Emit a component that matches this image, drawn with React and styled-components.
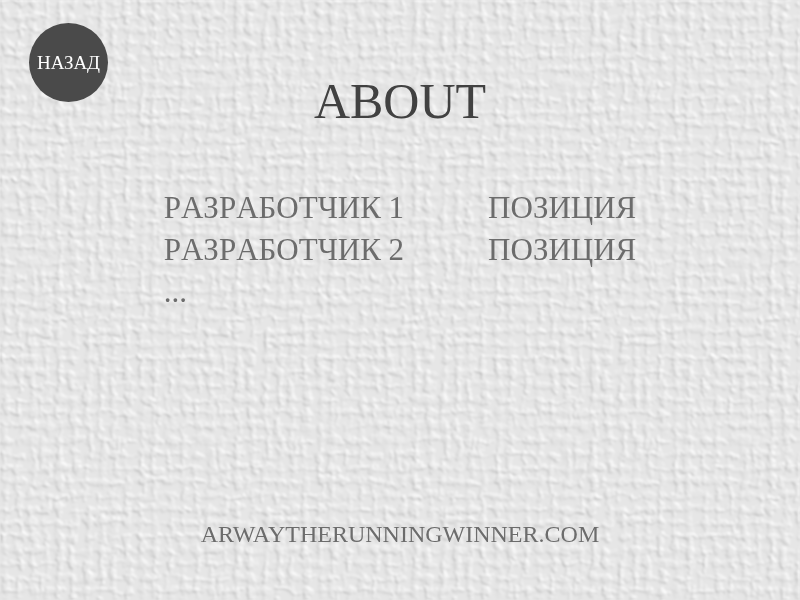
import React from 'react';
import styled, { createGlobalStyle } from 'styled-components';

const GlobalStyle = createGlobalStyle`
  body {
    margin: 0;
    background: #e4e4e4;
    font-family: "Liberation Serif", "Times New Roman", serif;
  }
`;

const Screen = styled.div`
  position: relative;
  isolation: isolate;
  will-change: transform;
  box-sizing: border-box;
  min-height: 100vh;
  display: flex;
  flex-direction: column;
  align-items: center;
  padding: 23px 29px 51px;
`;

const Texture = styled.svg`
  position: absolute;
  inset: 0;
  z-index: -1;
  width: 100%;
  height: 100%;
`;

const Header = styled.header`
  width: 100%;
  display: grid;
  grid-template-columns: 1fr auto 1fr;
  align-items: start;
`;

const BackButton = styled.button`
  width: 79px;
  height: 79px;
  padding: 0;
  border: 0;
  border-radius: 50%;
  background: #4a4a4a;
  color: #fff;
  font: 19px/24px "Liberation Serif", "Times New Roman", serif;
  cursor: pointer;
`;

const Title = styled.h1`
  margin: 49px 0 0;
  color: #414141;
  font-size: 50px;
  font-weight: 400;
  line-height: 58px;
`;

const Credits = styled.table`
  margin-top: 57px;
  border-collapse: collapse;
  color: #6c6c6c;
  font-size: 31px;
  font-kerning: none;
  line-height: 42px;
`;

const Cell = styled.td`
  padding: 0;

  & + & {
    padding-left: 84px;
  }
`;

const Footer = styled.footer`
  margin-top: auto;
`;

const SiteLink = styled.a`
  color: #6c6c6c;
  font-size: 24px;
  line-height: 30px;
  text-decoration: none;
`;

const developers = [
  ['РАЗРАБОТЧИК 1', 'ПОЗИЦИЯ'],
  ['РАЗРАБОТЧИК 2', 'ПОЗИЦИЯ'],
  ['...', ''],
];

const TILE = 178;

// Short raised fibres, laid in both directions on a loose grid.
function weaveFibres() {
  let state = 20177;
  const random = () => {
    state = (state * 16807) % 2147483647;
    return state / 2147483647;
  };
  const between = (low, high) => low + random() * (high - low);
  const step = TILE / 13;
  const fibres = [];
  for (let row = 0; row < 13; row += 1) {
    for (let col = 0; col < 13; col += 1) {
      const x = (col + between(0, 0.4)) * step;
      const y = (row + between(0, 0.4)) * step;
      fibres.push({
        d: `M${x} ${y}l${between(6, 22)} ${between(-1, 1)}`,
        width: between(2, 6),
        opacity: between(0.15, 0.6),
      });
      fibres.push({
        d: `M${x + between(0, 4)} ${y - 3}l${between(-1, 1)} ${between(6, 22)}`,
        width: between(2, 6),
        opacity: between(0.15, 0.6),
      });
    }
  }
  return fibres;
}

const fibres = weaveFibres();

function PaperTexture() {
  return (
    <Texture aria-hidden="true">
      <defs>
        <g id="fibres" stroke="#000" strokeLinecap="round" fill="none">
          {fibres.map(({ d, width, opacity }) => (
            <path key={d} d={d} strokeWidth={width} strokeOpacity={opacity} />
          ))}
        </g>
        <pattern id="weave" width={TILE} height={TILE} patternUnits="userSpaceOnUse">
          <use href="#fibres" />
          <use href="#fibres" x={-TILE} />
          <use href="#fibres" y={-TILE} />
          <use href="#fibres" x={-TILE} y={-TILE} />
        </pattern>
        <filter id="paper" x="0" y="0" width="100%" height="100%" colorInterpolationFilters="sRGB">
          <feTurbulence type="fractalNoise" baseFrequency="0.15" numOctaves="3" seed="4" result="grain" />
          <feDisplacementMap in="SourceGraphic" in2="grain" scale="8" xChannelSelector="R" yChannelSelector="G" />
          <feGaussianBlur stdDeviation="1" />
          <feDiffuseLighting surfaceScale="0.36" diffuseConstant="1.04" lightingColor="#ffffff">
            <feDistantLight azimuth="315" elevation="60" />
          </feDiffuseLighting>
        </filter>
      </defs>
      <rect width="100%" height="100%" fill="url(#weave)" filter="url(#paper)" />
    </Texture>
  );
}

export default function App() {
  return (
    <>
      <GlobalStyle />
      <Screen>
        <PaperTexture />
        <Header>
          <BackButton type="button">НАЗАД</BackButton>
          <Title>ABOUT</Title>
        </Header>
        <Credits>
          <tbody>
            {developers.map(([name, position]) => (
              <tr key={name}>
                <Cell>{name}</Cell>
                <Cell>{position}</Cell>
              </tr>
            ))}
          </tbody>
        </Credits>
        <Footer>
          <SiteLink href="http://arwaytherunningwinner.com">ARWAYTHERUNNINGWINNER.COM</SiteLink>
        </Footer>
      </Screen>
    </>
  );
}
